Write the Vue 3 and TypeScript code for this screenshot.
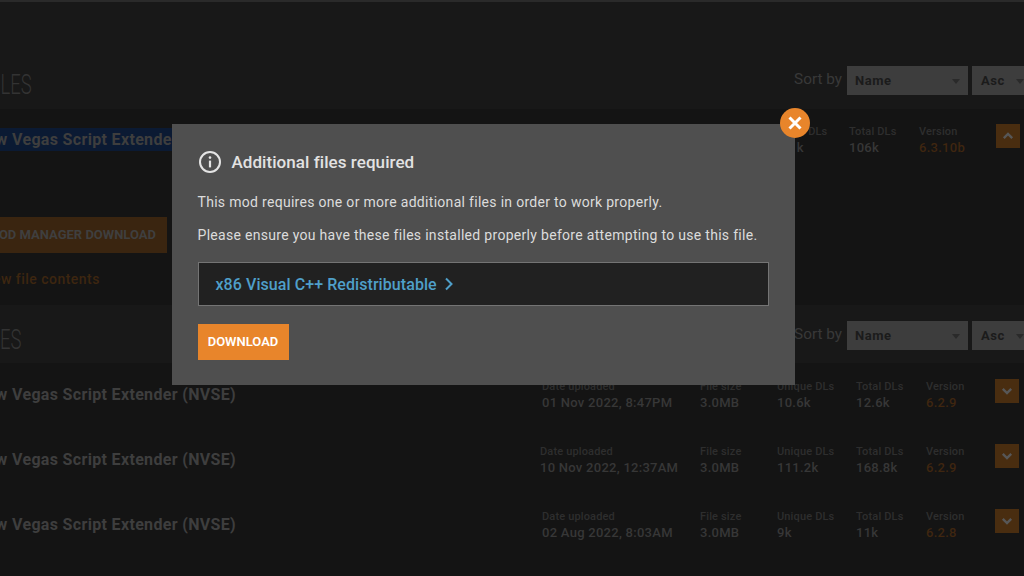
<script setup lang="ts">
interface Row {
  date: string
  inset: boolean
  size: string
  unique: string
  total: string
  version: string
}

const rows: Row[] = [
  { date: '01 Nov 2022, 8:47PM', inset: true, size: '3.0MB', unique: '10.6k', total: '12.6k', version: '6.2.9' },
  { date: '10 Nov 2022, 12:37AM', inset: false, size: '3.0MB', unique: '111.2k', total: '168.8k', version: '6.2.9' },
  { date: '02 Aug 2022, 8:03AM', inset: true, size: '3.0MB', unique: '9k', total: '11k', version: '6.2.8' },
]
</script>

<template>
  <div class="page">
    <div class="topline"></div>

    <header class="sec-head first-head">
      <h2 class="sec-title main-title">MAIN FILES</h2>
      <div class="sort">
        <span class="sort-label">Sort by</span>
        <div class="select wide">Name<i class="caret"></i></div>
        <div class="select narrow">Asc<i class="caret"></i></div>
      </div>
    </header>

    <section class="band main-band">
      <div class="main-row">
        <div class="row-name selected"><span>New Vegas Script Extender (NVSE)</span></div>
        <div class="stat main-unique"><span class="lab">Unique DLs</span><span class="val">72.1k</span></div>
        <div class="stat main-total"><span class="lab">Total DLs</span><span class="val">106k</span></div>
        <div class="stat main-version"><span class="lab">Version</span><span class="val ver">6.3.10b</span></div>
        <button class="toggle">
          <svg viewBox="0 0 12 12" width="12" height="12"><path d="M1.8 8.2 6 4l4.2 4.2" fill="none" stroke="#575757" stroke-width="2.4" /></svg>
        </button>
      </div>
      <div class="manager-btn">MOD MANAGER DOWNLOAD</div>
      <div class="contents-link">Preview file contents</div>
    </section>

    <header class="sec-head second-head">
      <h2 class="sec-title old-title">OLD FILES</h2>
      <div class="sort">
        <span class="sort-label">Sort by</span>
        <div class="select wide">Name<i class="caret"></i></div>
        <div class="select narrow">Asc<i class="caret"></i></div>
      </div>
    </header>

    <section class="band old-band">
      <div v-for="r in rows" :key="r.date" class="old-row">
        <div class="row-name">New Vegas Script Extender (NVSE)</div>
        <div class="stat date" :class="{ inset: r.inset }"><span class="lab">Date uploaded</span><span class="val">{{ r.date }}</span></div>
        <div class="stat"><span class="lab">File size</span><span class="val">{{ r.size }}</span></div>
        <div class="stat"><span class="lab">Unique DLs</span><span class="val">{{ r.unique }}</span></div>
        <div class="stat"><span class="lab">Total DLs</span><span class="val">{{ r.total }}</span></div>
        <div class="stat"><span class="lab">Version</span><span class="val ver">{{ r.version }}</span></div>
        <button class="toggle">
          <svg viewBox="0 0 12 12" width="12" height="12"><path d="M1.8 3.8 6 8l4.2-4.2" fill="none" stroke="#575757" stroke-width="2.4" /></svg>
        </button>
      </div>
    </section>

    <div class="modal">
      <button class="close" aria-label="Close">
        <svg viewBox="0 0 16 16" width="16" height="16"><path d="M2.5 2.5l11 11M13.5 2.5l-11 11" fill="none" stroke="#fff" stroke-width="3" /></svg>
      </button>
      <div class="modal-title">
        <svg viewBox="0 0 24 24" width="24" height="24">
          <circle cx="12" cy="12" r="10" fill="none" stroke="#e4e4e4" stroke-width="2" />
          <circle cx="12" cy="7.6" r="1.3" fill="#e4e4e4" />
          <rect x="10.9" y="10.6" width="2.2" height="6.8" fill="#e4e4e4" />
        </svg>
        <h3>Additional files required</h3>
      </div>
      <p>This mod requires one or more additional files in order to work properly.</p>
      <p>Please ensure you have these files installed properly before attempting to use this file.</p>
      <div class="req-box">
        <span class="req-link">x86 Visual C++ Redistributable</span>
        <svg viewBox="0 0 10 14" width="10" height="14"><path d="M2 1.5 7.5 7 2 12.5" fill="none" stroke="#4f9fc9" stroke-width="2" /></svg>
      </div>
      <div class="download">DOWNLOAD</div>
    </div>
  </div>
</template>

<style>
html,
body {
  margin: 0;
  background: #181818;
}
</style>

<style scoped>
.page {
  position: relative;
  width: 1024px;
  height: 576px;
  overflow: hidden;
  background: #181818;
  font-family: Roboto, "Liberation Sans", sans-serif;
  color: #444;
}
.topline {
  height: 2px;
  background: #2a2a2a;
}
.sec-head {
  display: flex;
  align-items: center;
  justify-content: space-between;
  box-sizing: border-box;
}
.first-head {
  height: 107px;
  padding-top: 50px;
}
.second-head {
  height: 58px;
  padding-top: 3px;
}
.sec-title {
  margin: 9px 0 0;
  font-weight: 300;
  font-size: 28px;
  line-height: 32px;
  color: #333;
  white-space: nowrap;
  transform: scaleX(0.66);
  transform-origin: left center;
}
.main-title {
  margin-left: -65px;
}
.old-title {
  margin-left: -64px;
}
.sort {
  display: flex;
  align-items: center;
  gap: 5px;
  margin-right: -20px;
}
.sort-label {
  margin-bottom: 3px;
  font-size: 15.3px;
  color: #383838;
}
.select {
  position: relative;
  box-sizing: border-box;
  height: 29px;
  padding: 0 0 0 8px;
  background: #3d3d3d;
  color: #1b1b1b;
  font-size: 13px;
  font-weight: 700;
  line-height: 29px;
  letter-spacing: 0.5px;
}
.wide {
  width: 121px;
}
.narrow {
  width: 72px;
  margin-left: -1px;
  padding-left: 9px;
}
.caret {
  position: absolute;
  right: 8px;
  top: 13px;
  width: 0;
  height: 0;
  border-left: 4px solid transparent;
  border-right: 4px solid transparent;
  border-top: 5px solid #2a2a2a;
}
.narrow .caret {
  right: 20px;
}
.band {
  background: #141414;
  box-sizing: border-box;
}
.main-band {
  height: 196px;
  padding-top: 15px;
}
.old-band {
  height: 213px;
}
.main-row,
.old-row {
  display: flex;
  align-items: flex-start;
  height: 65px;
}
.row-name {
  margin-left: -25px;
  font-size: 16px;
  font-weight: 700;
  letter-spacing: 0.33px;
  line-height: 23px;
  color: #3e3e3e;
  white-space: nowrap;
}
.old-row .row-name {
  flex: none;
  width: 565px;
  height: 23px;
  padding-top: 20px;
}
.main-row .row-name {
  flex: none;
  width: 795px;
  padding-top: 4px;
}
.selected span {
  display: inline-block;
  padding-right: 300px;
  background: #0b1a33;
}
.stat {
  display: flex;
  flex: none;
  flex-direction: column;
  white-space: nowrap;
}
.main-row .stat {
  padding-top: 1px;
}
.old-row .stat {
  padding-top: 17px;
}
.old-row .date {
  width: 160px;
}
.old-row .date.inset {
  width: 158px;
  padding-left: 2px;
}
.old-row .stat:nth-child(3) {
  width: 77px;
}
.old-row .stat:nth-child(4) {
  width: 79px;
}
.old-row .stat:nth-child(5) {
  width: 70px;
}
.old-row .stat:nth-child(6) {
  width: 69px;
}
.main-unique {
  width: 79px;
}
.main-total {
  width: 70px;
}
.main-version {
  width: 77px;
}
.lab {
  font-size: 11px;
  font-weight: 500;
  letter-spacing: 0.15px;
  line-height: 14px;
  color: #2e2e2e;
}
.val {
  font-size: 13px;
  font-weight: 500;
  letter-spacing: 0.27px;
  line-height: 17px;
  color: #373737;
}
.ver {
  color: #3f2610;
}
.toggle {
  display: flex;
  flex: none;
  align-items: center;
  justify-content: center;
  width: 24px;
  height: 24px;
  margin-top: 16px;
  padding: 0;
  border: 0;
  background: #492d10;
}
.main-row .toggle {
  margin-top: 0;
}
.manager-btn {
  box-sizing: border-box;
  width: 167px;
  height: 36px;
  margin-top: 28px;
  padding-right: 11px;
  overflow: hidden;
  background: #3a2510;
  color: #3f3f3f;
  font-size: 13px;
  font-weight: 700;
  line-height: 36px;
  text-align: right;
  white-space: nowrap;
  direction: rtl;
}
.contents-link {
  margin: 16px 0 0 -41px;
  color: #3d2610;
  font-size: 14px;
  font-weight: 500;
  letter-spacing: 0.47px;
  line-height: 20px;
  white-space: nowrap;
}
.modal {
  position: absolute;
  left: 172px;
  top: 124px;
  box-sizing: border-box;
  width: 623px;
  height: 261px;
  padding: 26px 26.5px 0 25.5px;
  background: #4f4f4f;
  color: #e2e2e2;
}
.close {
  position: absolute;
  right: -15px;
  top: -16px;
  display: flex;
  align-items: center;
  justify-content: center;
  width: 30px;
  height: 30px;
  padding: 0;
  border: 0;
  border-radius: 50%;
  background: #e8852b;
}
.modal-title {
  display: flex;
  align-items: center;
  gap: 10px;
  height: 24px;
  margin-bottom: 19px;
}
.modal-title h3 {
  margin: 0;
  color: #e2e2e2;
  font-size: 17px;
  font-weight: 500;
  letter-spacing: 0.06px;
}
.modal p {
  margin: 0 0 14px;
  color: #dcdcdc;
  font-size: 14px;
  letter-spacing: 0.3px;
  line-height: 19px;
}
.req-box {
  display: flex;
  align-items: center;
  gap: 7px;
  box-sizing: border-box;
  height: 44px;
  margin-top: 17px;
  padding-left: 17px;
  background: #212121;
  border: 1.5px solid #747474;
}
.req-link {
  color: #4f9fc9;
  font-size: 16px;
  font-weight: 500;
  letter-spacing: 0.07px;
}
.download {
  width: 91px;
  height: 36px;
  margin-top: 18px;
  background: #e8852b;
  color: #fff;
  font-size: 13px;
  font-weight: 600;
  line-height: 36px;
  text-align: center;
}
</style>
